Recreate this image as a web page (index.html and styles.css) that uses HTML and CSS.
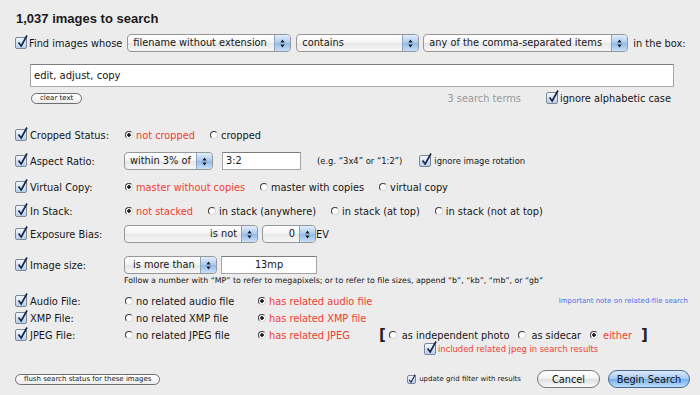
FILE: index.html
```html
<!DOCTYPE html>
<html lang="en">
<head>
    <meta charset="UTF-8">
    <title>Find Images</title>
    <link rel="stylesheet" href="styles.css">
</head>
<body>
<div class="dialog">
    <h1>1,037 images to search</h1>

    <div class="find-row">
        <span class="cb"><svg viewBox="0 0 11 13"><path d="M1.5 7.5 L4.2 11 L10 0.5"/></svg></span>
        <span class="find-label">Find images whose</span>
        <span class="popup pop-field"><span class="ptext">filename without extension</span><span class="arrows"><svg viewBox="0 0 8 12"><path d="M4 1.5 L6.5 4.8 H1.5Z M4 10.5 L6.5 7.2 H1.5Z"/></svg></span></span>
        <span class="popup pop-op"><span class="ptext">contains</span><span class="arrows"><svg viewBox="0 0 8 12"><path d="M4 1.5 L6.5 4.8 H1.5Z M4 10.5 L6.5 7.2 H1.5Z"/></svg></span></span>
        <span class="popup pop-mode"><span class="ptext">any of the comma-separated items</span><span class="arrows"><svg viewBox="0 0 8 12"><path d="M4 1.5 L6.5 4.8 H1.5Z M4 10.5 L6.5 7.2 H1.5Z"/></svg></span></span>
        <span class="in-box">in the box:</span>
    </div>

    <div class="terms-box">edit, adjust, copy</div>

    <div class="terms-row">
        <button class="mini">clear text</button>
        <span class="count">3 search terms</span>
        <span class="cb"><svg viewBox="0 0 11 13"><path d="M1.5 7.5 L4.2 11 L10 0.5"/></svg></span>
        <span class="ignore-case">ignore alphabetic case</span>
    </div>

    <div class="criteria">
        <div class="crit r-crop">
            <div class="name"><span class="cb"><svg viewBox="0 0 11 13"><path d="M1.5 7.5 L4.2 11 L10 0.5"/></svg></span>Cropped Status:</div>
            <span class="opt sel"><span class="rb on"></span>not cropped</span>
            <span class="opt"><span class="rb"></span>cropped</span>
        </div>

        <div class="crit r-aspect">
            <div class="name"><span class="cb"><svg viewBox="0 0 11 13"><path d="M1.5 7.5 L4.2 11 L10 0.5"/></svg></span>Aspect Ratio:</div>
            <span class="popup pop-aspect"><span class="ptext">within 3% of</span><span class="arrows"><svg viewBox="0 0 8 12"><path d="M4 1.5 L6.5 4.8 H1.5Z M4 10.5 L6.5 7.2 H1.5Z"/></svg></span></span>
            <span class="field f-aspect">3:2</span>
            <span class="small eg">(e.g. “3x4” or “1:2”)</span>
            <span class="cb rot"><svg viewBox="0 0 11 13"><path d="M1.5 7.5 L4.2 11 L10 0.5"/></svg></span>
            <span class="small">ignore image rotation</span>
        </div>

        <div class="crit r-virtual">
            <div class="name"><span class="cb"><svg viewBox="0 0 11 13"><path d="M1.5 7.5 L4.2 11 L10 0.5"/></svg></span>Virtual Copy:</div>
            <span class="opt sel"><span class="rb on"></span>master without copies</span>
            <span class="opt"><span class="rb"></span>master with copies</span>
            <span class="opt"><span class="rb"></span>virtual copy</span>
        </div>

        <div class="crit r-stack">
            <div class="name"><span class="cb"><svg viewBox="0 0 11 13"><path d="M1.5 7.5 L4.2 11 L10 0.5"/></svg></span>In Stack:</div>
            <span class="opt sel"><span class="rb on"></span>not stacked</span>
            <span class="opt"><span class="rb"></span>in stack (anywhere)</span>
            <span class="opt"><span class="rb"></span>in stack (at top)</span>
            <span class="opt"><span class="rb"></span>in stack (not at top)</span>
        </div>

        <div class="crit r-exposure">
            <div class="name"><span class="cb"><svg viewBox="0 0 11 13"><path d="M1.5 7.5 L4.2 11 L10 0.5"/></svg></span>Exposure Bias:</div>
            <span class="popup pop-isnot"><span class="ptext right">is not</span><span class="arrows"><svg viewBox="0 0 8 12"><path d="M4 1.5 L6.5 4.8 H1.5Z M4 10.5 L6.5 7.2 H1.5Z"/></svg></span></span>
            <span class="popup pop-ev"><span class="ptext right">0</span><span class="arrows"><svg viewBox="0 0 8 12"><path d="M4 1.5 L6.5 4.8 H1.5Z M4 10.5 L6.5 7.2 H1.5Z"/></svg></span></span>
            <span>EV</span>
        </div>

        <div class="crit r-size">
            <div class="name"><span class="cb"><svg viewBox="0 0 11 13"><path d="M1.5 7.5 L4.2 11 L10 0.5"/></svg></span>Image size:</div>
            <span class="popup pop-size"><span class="ptext">is more than</span><span class="arrows"><svg viewBox="0 0 8 12"><path d="M4 1.5 L6.5 4.8 H1.5Z M4 10.5 L6.5 7.2 H1.5Z"/></svg></span></span>
            <span class="field f-size">13mp</span>
        </div>
        <div class="size-hint">Follow a number with “MP” to refer to megapixels; or to refer to file sizes, append “b”, “kb”, “mb”, or “gb”</div>

        <div class="crit rel r-audio">
            <div class="name"><span class="cb"><svg viewBox="0 0 11 13"><path d="M1.5 7.5 L4.2 11 L10 0.5"/></svg></span>Audio File:</div>
            <span class="opt col1"><span class="rb"></span>no related audio file</span>
            <span class="opt sel"><span class="rb on"></span>has related audio file</span>
            <a class="note">Important note on related-file search</a>
        </div>

        <div class="crit rel">
            <div class="name"><span class="cb"><svg viewBox="0 0 11 13"><path d="M1.5 7.5 L4.2 11 L10 0.5"/></svg></span>XMP File:</div>
            <span class="opt col1"><span class="rb"></span>no related XMP file</span>
            <span class="opt sel"><span class="rb on"></span>has related XMP file</span>
        </div>

        <div class="crit rel">
            <div class="name"><span class="cb"><svg viewBox="0 0 11 13"><path d="M1.5 7.5 L4.2 11 L10 0.5"/></svg></span>JPEG File:</div>
            <span class="opt col1"><span class="rb"></span>no related JPEG file</span>
            <span class="opt sel col2"><span class="rb on"></span>has related JPEG</span>
            <span class="bracket">[</span>
            <span class="opt tight"><span class="rb"></span>as independent photo</span>
            <span class="opt tight"><span class="rb"></span>as sidecar</span>
            <span class="opt tight sel"><span class="rb on"></span>either</span>
            <span class="bracket">]</span>
        </div>

        <div class="incl-row">
            <span class="cb"><svg viewBox="0 0 11 13"><path d="M1.5 7.5 L4.2 11 L10 0.5"/></svg></span>
            <span class="small sel">included related jpeg in search results</span>
        </div>
    </div>

    <div class="bottom-row">
        <button class="mini flush">flush search status for these images</button>
        <div class="actions">
            <span class="cb sm"><svg viewBox="0 0 11 13"><path d="M1.5 7.5 L4.2 11 L10 0.5"/></svg></span>
            <span class="tiny">update grid filter with results</span>
            <button class="push cancel">Cancel</button>
            <button class="push default">Begin Search</button>
        </div>
    </div>
</div>
</body>
</html>
```

FILE: styles.css
```css
body {
    margin: 0;
    background: #ececec;
    font-family: "DejaVu Sans", sans-serif;
    font-size: 9.8px;
    color: #161616;
}
.dialog {
    width: 700px;
    height: 395px;
    padding: 11px 10px 0 15px;
    box-sizing: border-box;
}
h1 {
    margin: 0 0 0 1px;
    font: bold 13px/16px "Liberation Sans", Arial, sans-serif;
    color: #1a1a1a;
}

/* checkbox */
.cb {
    position: relative;
    display: inline-block;
    flex: none;
    width: 10px;
    height: 10px;
    border: 1px solid #7b8696;
    border-radius: 2px;
    background: linear-gradient(#f3f7fd, #b8d0ee);
}
.cb svg {
    position: absolute;
    left: 1px;
    top: -3px;
    width: 11px;
    height: 13px;
    overflow: visible;
}
.cb path {
    fill: none;
    stroke: #1c2748;
    stroke-width: 1.7;
}
.cb.sm {
    width: 7px;
    height: 7px;
}
.cb.sm svg {
    left: 0;
    top: -2px;
    width: 8px;
    height: 10px;
}
.cb.sm path {
    stroke-width: 1.5;
}

/* radio */
.rb {
    display: inline-block;
    flex: none;
    width: 6px;
    height: 6px;
    border: 1px solid;
    border-color: #3c3c3c #d6d6d6 #d6d6d6 #3c3c3c;
    border-radius: 50%;
    background: #fff;
}
.rb.on {
    background: radial-gradient(circle, #1e1e1e 0 1.5px, #fff 2px);
}

/* popup menu */
.popup {
    display: inline-flex;
    flex: none;
    height: 18px;
    box-sizing: border-box;
    border: 1px solid #979797;
    border-radius: 4px;
    background: linear-gradient(#ffffff, #f4f4f4 50%, #e6e6e6 51%, #f7f7f7);
    overflow: hidden;
}
.ptext {
    flex: 1;
    padding-left: 5px;
    line-height: 16px;
    white-space: nowrap;
}
.ptext.right {
    text-align: right;
    padding-right: 4px;
}
.arrows {
    display: flex;
    align-items: center;
    justify-content: center;
    width: 15px;
    border-left: 1px solid #8ea3bf;
    border-radius: 0 3px 3px 0;
    background: linear-gradient(#e3eefb, #a9c9ef 50%, #8fb8ea 51%, #c9e0f8);
}
.arrows svg {
    width: 7px;
    height: 11px;
}
.arrows path {
    fill: #1e1e1e;
}

/* text field */
.field {
    display: inline-block;
    flex: none;
    height: 18px;
    box-sizing: border-box;
    border: 1px solid #a5a5a5;
    border-top-color: #7d7d7d;
    background: #fff;
    padding-left: 3px;
    line-height: 16px;
}

.find-row {
    display: flex;
    align-items: center;
    height: 18px;
    margin-top: 7px;
}
.find-label {
    margin: 0 5px 0 2px;
}
.pop-field { width: 164px; }
.pop-op { width: 123px; margin-left: 5px; }
.pop-mode { width: 205px; margin-left: 4px; }
.in-box { margin-left: 5px; }

.terms-box {
    width: 644px;
    height: 23px;
    box-sizing: border-box;
    margin: 12px 0 0 15px;
    border: 1px solid #a8a8a8;
    border-top-color: #808080;
    background: #fff;
    padding-left: 3px;
    line-height: 21px;
    font-size: 10px;
}
.terms-row {
    display: flex;
    align-items: center;
    width: 640px;
    height: 14px;
    margin: 4px 0 0 16px;
}
.count {
    margin-left: auto;
    margin-right: 25px;
    color: #9a9a9a;
}
.ignore-case {
    margin-left: 2px;
}

.mini {
    height: 11px;
    padding: 0 8px;
    border: 1px solid #6e6e6e;
    border-radius: 6px;
    background: linear-gradient(#ffffff, #ececec);
    font-family: inherit;
    font-size: 7px;
    line-height: 9px;
    color: #1a1a1a;
}

.criteria {
    margin-top: 20px;
}
.crit {
    display: flex;
    align-items: center;
    height: 20px;
}
.name {
    display: flex;
    align-items: center;
    gap: 3px;
    width: 109px;
    flex: none;
}
.opt {
    display: inline-flex;
    align-items: center;
    gap: 3px;
    margin-right: 14px;
    margin-left: 1px;
    white-space: nowrap;
}
.sel {
    color: #ef3d30;
}
.small {
    font-size: 8.4px;
}
.r-aspect { margin-top: 6px; }
.r-virtual { margin-top: 6px; }
.r-stack { margin-top: 4px; }
.r-exposure { margin-top: 3px; }
.r-size { margin-top: 11px; }

.pop-aspect { width: 89px; }
.f-aspect { width: 79px; margin-left: 9px; }
.eg { margin-left: 16px; }
.cb.rot { margin: 0 3px 0 17px; }

.pop-isnot { width: 134px; }
.pop-ev { width: 54px; margin-left: 4px; }
.pop-size { width: 93px; }
.pop-size .ptext { padding-left: 8px; }
.f-size { width: 96px; margin-left: 4px; text-align: center; padding: 0; }

.size-hint {
    height: 10px;
    line-height: 10px;
    margin: 1px 0 0 109px;
    font-size: 7.85px;
    white-space: nowrap;
}

.rel {
    height: 16px;
    margin-top: 1px;
}
.r-audio { margin-top: 7px; }
.col1 { width: 129px; margin-right: 3px; }
.col2 { width: 118px; margin-right: 3px; }
.note {
    margin-left: auto;
    margin-right: 2px;
    font-size: 7px;
    color: #4d72e4;
}
.bracket {
    font-size: 15px;
    font-weight: bold;
    margin-right: 3px;
    color: #222;
}
.opt.tight {
    gap: 5px;
    margin-right: 9px;
    margin-left: 0;
}

.incl-row {
    display: flex;
    align-items: center;
    gap: 2px;
    height: 12px;
    margin-left: 409px;
}

.bottom-row {
    display: flex;
    align-items: center;
    height: 18px;
    margin-top: 15px;
}
.actions {
    display: flex;
    align-items: center;
    margin-left: auto;
}
.tiny {
    font-size: 7px;
    margin-left: 3px;
}
.push {
    height: 18px;
    border: 1px solid #777;
    border-radius: 9px;
    background: linear-gradient(#ffffff, #f2f2f2 50%, #dedede 51%, #fbfbfb);
    font-family: inherit;
    font-size: 9.8px;
    color: #111;
    padding: 0;
}
.cancel {
    width: 63px;
    margin-left: 16px;
}
.default {
    width: 82px;
    margin-left: 8px;
    border-color: #4a6897;
    background: linear-gradient(#dbeafc, #a3c9f3 50%, #72aced 51%, #bfe0fc);
}
```
